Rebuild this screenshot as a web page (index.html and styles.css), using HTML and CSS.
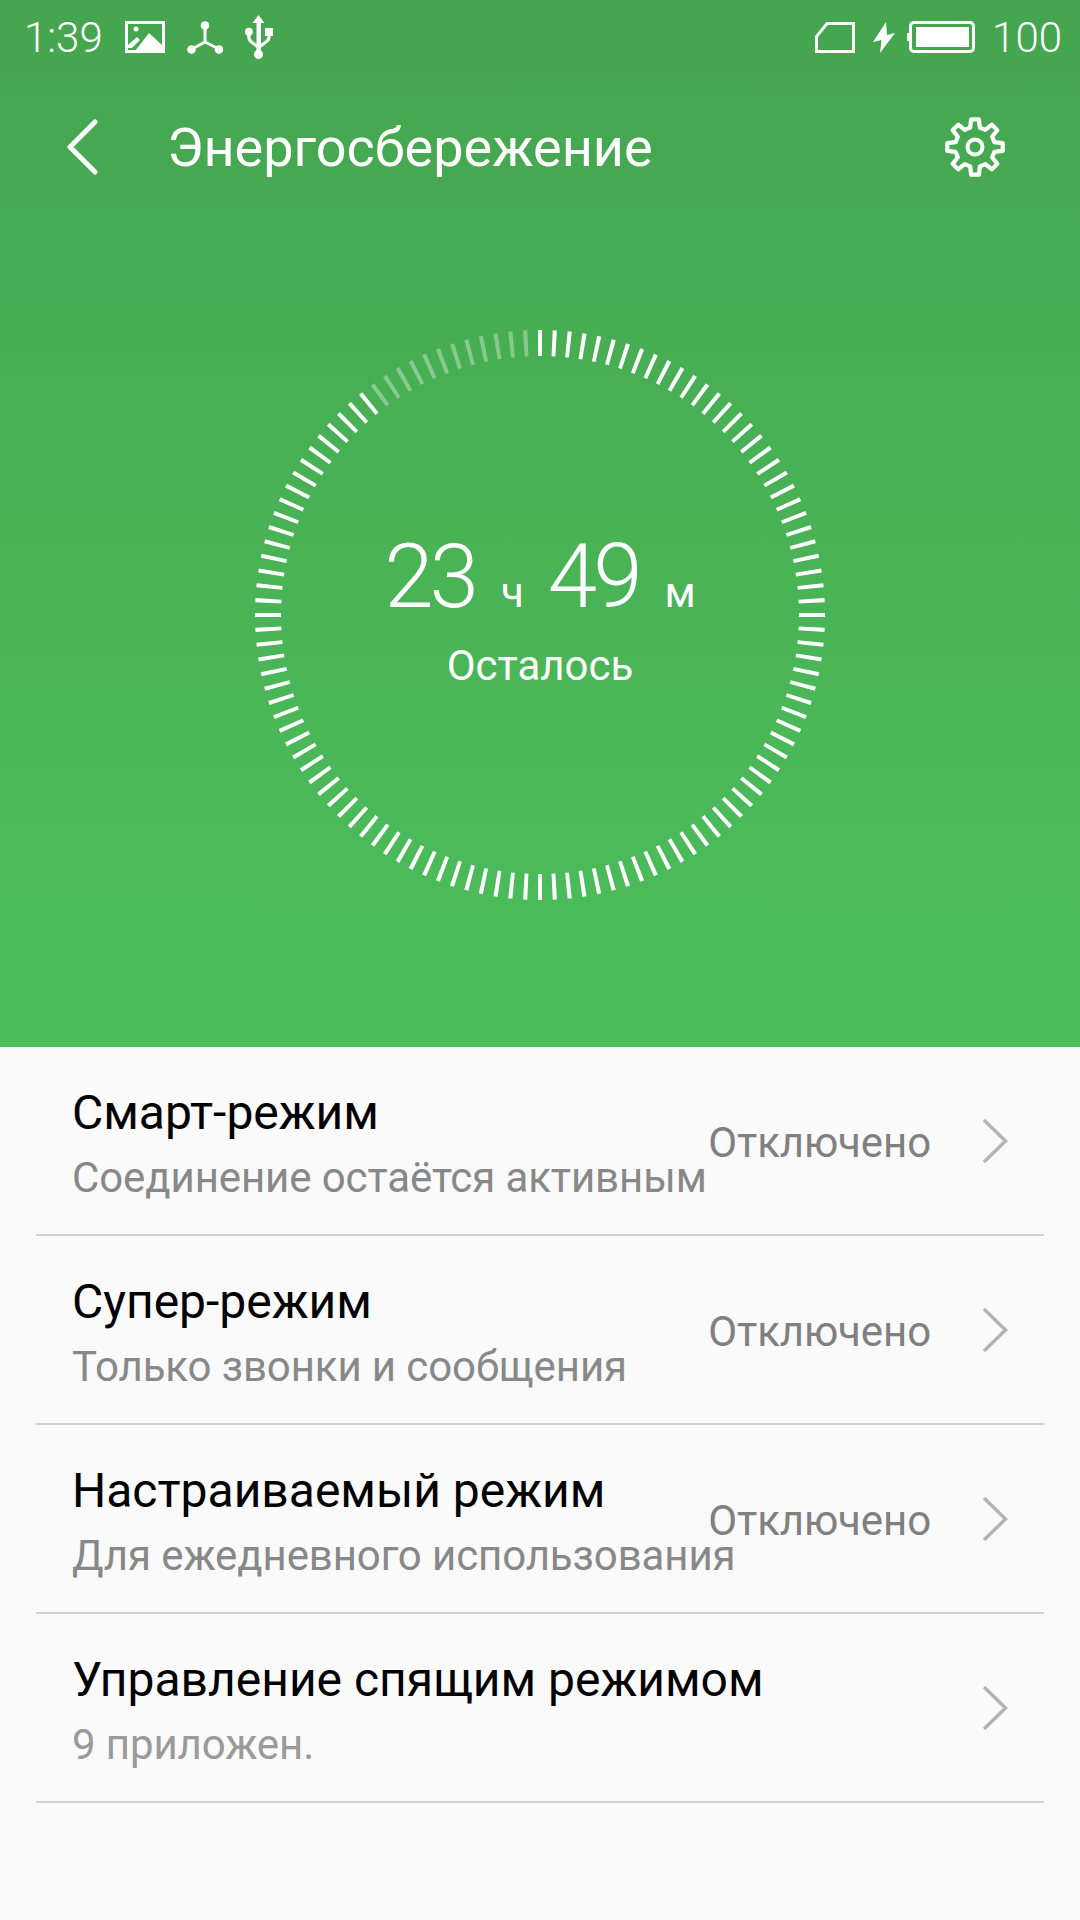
FILE: index.html
```html
<!DOCTYPE html>
<html lang="ru">
<head>
    <meta charset="UTF-8">
    <title>Энергосбережение</title>
    <link rel="stylesheet" href="styles.css">
</head>
<body>
    <header class="hero">
        <div class="statusbar">
            <div class="status-left">
                <span class="status-text">1:39</span>
                <svg class="ic-picture" width="40" height="32" viewBox="0 0 40 32">
                    <path fill="#fff" fill-rule="evenodd" d="M0 0H40V32H0ZM3 3V29H37V3Z"/>
                    <path fill="#fff" d="M3 24L12 16L15 19L7 27H3ZM10 30L24 12L37 24V30Z"/>
                    <circle cx="11" cy="8" r="2.5" fill="#fff"/>
                </svg>
                <svg class="ic-share" width="36" height="33" viewBox="0 0 36 33">
                    <circle cx="18" cy="4.5" r="4.3" fill="#fff"/>
                    <circle cx="4.5" cy="28.5" r="4.3" fill="#fff"/>
                    <circle cx="32" cy="28.5" r="4.3" fill="#fff"/>
                    <path d="M18 5V21M18 21L5 28M18 21L32 28" stroke="#fff" stroke-width="3" fill="none"/>
                </svg>
                <svg class="ic-usb" width="28" height="44" viewBox="0 0 28 44">
                    <path fill="#fff" d="M13.5 0L19.5 8H16V36H11.5V8H7.5Z"/>
                    <circle cx="13.5" cy="39.5" r="4.5" fill="#fff"/>
                    <circle cx="3.9" cy="16.7" r="3.9" fill="#fff"/>
                    <rect x="20" y="13" width="8" height="8" fill="#fff"/>
                    <path d="M3.9 18V22Q3.9 25 6.5 27L13.5 32.5L21 27Q24 25 24 22V20" stroke="#fff" stroke-width="3.2" fill="none"/>
                </svg>
            </div>
            <div class="status-right">
                <svg class="ic-sim" width="40" height="31" viewBox="0 0 40 31">
                    <path d="M1.5 29.5V14.5L12 1.5H38.5V29.5Z" fill="none" stroke="#fff" stroke-width="3"/>
                </svg>
                <svg class="ic-bolt" width="22" height="31" viewBox="0 0 22 31">
                    <path fill="#fff" d="M13 0L0 20L8.5 18L7 31L22 11L14 13Z"/>
                </svg>
                <svg class="ic-battery" width="68" height="32" viewBox="0 0 68 32">
                    <rect x="3.5" y="1.5" width="63" height="29" rx="3.5" fill="none" stroke="#fff" stroke-width="3"/>
                    <rect x="9" y="6" width="53" height="20" fill="#fff"/>
                    <rect x="0" y="12" width="3" height="8" fill="#fff"/>
                </svg>
                <span class="status-text">100</span>
            </div>
        </div>

        <div class="toolbar">
            <svg class="ic-back" width="34" height="56" viewBox="0 0 34 56">
                <path d="M30 3L5 28L30 53" fill="none" stroke="#fff" stroke-width="5" stroke-linecap="round" stroke-linejoin="round"/>
            </svg>
            <h1 class="title">Энергосбережение</h1>
            <svg class="ic-gear" width="60" height="60" viewBox="-30 -30 60 60">
                <path fill="none" stroke="#fff" stroke-width="4.2" stroke-linejoin="round" d="M-4.84 -19.4L-3.9 -27.7H3.9L4.84 -19.4L10.3 -17.14L16.85 -22.36L22.36 -16.85L17.14 -10.3L19.4 -4.84L27.7 -3.9V3.9L19.4 4.84L17.14 10.3L22.36 16.85L16.85 22.36L10.3 17.14L4.84 19.4L3.9 27.7H-3.9L-4.84 19.4L-10.3 17.14L-16.85 22.36L-22.36 16.85L-17.14 10.3L-19.4 4.84L-27.7 3.9V-3.9L-19.4 -4.84L-17.14 -10.3L-22.36 -16.85L-16.85 -22.36L-10.3 -17.14Z"/>
                <circle cx="0" cy="0" r="7.5" fill="none" stroke="#fff" stroke-width="4"/>
            </svg>
        </div>

        <div class="gauge">
            <svg class="ring" width="570" height="570" viewBox="0 0 570 570">
                <circle class="ring-ticks" cx="285" cy="285" r="272" pathLength="120"/>
            </svg>
            <div class="gauge-center">
                <div class="time">
                    <span class="num">23</span><span class="unit unit-h">ч</span><span class="num">49</span><span class="unit">м</span>
                </div>
                <div class="remain">Осталось</div>
            </div>
        </div>
    </header>

    <main class="list">
        <div class="row">
            <div class="row-text">
                <div class="row-title">Смарт-режим</div>
                <div class="row-sub">Соединение остаётся активным</div>
            </div>
            <span class="row-state">Отключено</span>
            <svg class="chevron" width="26" height="44" viewBox="0 0 26 44"><path d="M2 1L23.5 22L2 43" fill="none" stroke="#b3b3b3" stroke-width="3.4"/></svg>
        </div>
        <div class="row">
            <div class="row-text">
                <div class="row-title">Супер-режим</div>
                <div class="row-sub">Только звонки и сообщения</div>
            </div>
            <span class="row-state">Отключено</span>
            <svg class="chevron" width="26" height="44" viewBox="0 0 26 44"><path d="M2 1L23.5 22L2 43" fill="none" stroke="#b3b3b3" stroke-width="3.4"/></svg>
        </div>
        <div class="row">
            <div class="row-text">
                <div class="row-title">Настраиваемый режим</div>
                <div class="row-sub">Для ежедневного использования</div>
            </div>
            <span class="row-state">Отключено</span>
            <svg class="chevron" width="26" height="44" viewBox="0 0 26 44"><path d="M2 1L23.5 22L2 43" fill="none" stroke="#b3b3b3" stroke-width="3.4"/></svg>
        </div>
        <div class="row">
            <div class="row-text">
                <div class="row-title">Управление спящим режимом</div>
                <div class="row-sub row-sub-light">9 приложен.</div>
            </div>
            <svg class="chevron" width="26" height="44" viewBox="0 0 26 44"><path d="M2 1L23.5 22L2 43" fill="none" stroke="#b3b3b3" stroke-width="3.4"/></svg>
        </div>
    </main>
</body>
</html>
```

FILE: styles.css
```css
* {
    box-sizing: border-box;
}
html, body {
    margin: 0;
    height: 1920px;
    overflow: hidden;
}
body {
    width: 1080px;
    background: #fafafa;
    font-family: Roboto, "Noto Sans", sans-serif;
}
.hero {
    height: 1047px;
    background: linear-gradient(#45a54f, #4cbf5c);
    color: #fff;
    padding-top: 12px;
}
.statusbar {
    height: 50px;
    padding: 0 18px 0 24px;
    display: flex;
    justify-content: space-between;
    align-items: center;
}
.status-left, .status-right {
    display: flex;
    align-items: center;
}
.status-text {
    font-size: 42px;
    font-weight: 300;
}
.ic-picture { margin-left: 22px; }
.ic-share { margin-left: 22px; }
.ic-usb { margin-left: 22px; }
.ic-bolt { margin-left: 18px; }
.ic-battery { margin-left: 12px; }
.status-right .status-text { margin-left: 17px; }

.toolbar {
    height: 90px;
    margin-top: 40px;
    padding: 0 75px 0 65px;
    display: flex;
    align-items: center;
}
.title {
    margin: 0 0 0 68px;
    flex: 1;
    font-size: 54px;
    font-weight: 400;
}
.gauge {
    margin: 138px auto 0;
    width: 570px;
    height: 570px;
    position: relative;
    display: flex;
    align-items: center;
    justify-content: center;
}
.ring {
    position: absolute;
    left: 0;
    top: 0;
    -webkit-mask-image: conic-gradient(from -1.5deg, #000 0 324deg, rgba(0, 0, 0, 0.35) 324deg 360deg);
    mask-image: conic-gradient(from -1.5deg, #000 0 324deg, rgba(0, 0, 0, 0.35) 324deg 360deg);
}
.ring-ticks {
    fill: none;
    stroke: #fff;
    stroke-width: 26;
    stroke-dasharray: 0.28 0.72;
    stroke-dashoffset: 0.14;
    transform: rotate(-90deg);
    transform-origin: 285px 285px;
}
.gauge-center {
    text-align: center;
    margin-bottom: 16px;
}
.time {
    display: flex;
    align-items: baseline;
    justify-content: center;
}
.num {
    font-size: 89px;
    font-weight: 300;
    letter-spacing: -4px;
}
.unit {
    font-size: 42px;
    font-weight: 400;
    margin: 0 0 0 26px;
}
.unit-h {
    margin-right: 24px;
}
.remain {
    margin-top: 12px;
    font-size: 42px;
    font-weight: 400;
}

.list {
    padding: 0 36px;
}
.row {
    height: 189px;
    padding: 0 36px;
    border-bottom: 2px solid #d2d2d2;
    display: flex;
    align-items: center;
}
.row-text {
    flex: 1;
    min-width: 0;
    padding-top: 5px;
    white-space: nowrap;
}
.row-title {
    font-size: 48px;
    color: #000;
}
.row-sub {
    margin-top: 12px;
    font-size: 42px;
    letter-spacing: -0.1px;
    color: #888;
}
.row-sub-light {
    color: #9a9a9a;
}
.row-state {
    padding-top: 3px;
    font-size: 42px;
    letter-spacing: -0.1px;
    color: #808080;
}
.chevron {
    margin-left: 51px;
}
```
